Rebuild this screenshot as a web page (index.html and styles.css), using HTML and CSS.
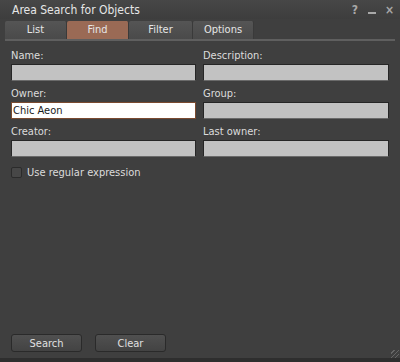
FILE: index.html
```html
<!DOCTYPE html>
<html>
<head>
<meta charset="utf-8">
<link rel="stylesheet" href="styles.css">
</head>
<body>
<div class="win">
  <div class="titlebar">
    <span class="title">Area Search for Objects</span>
    <div class="ctrls">
      <span class="ctl">?</span>
      <span class="ctl min"></span>
      <span class="ctl">×</span>
    </div>
  </div>
  <div class="tabs">
    <div class="tab">List</div>
    <div class="tab active">Find</div>
    <div class="tab">Filter</div>
    <div class="tab">Options</div>
  </div>
  <div class="body">
    <div class="grid">
      <div class="field"><label>Name:</label><div class="input"></div></div>
      <div class="field"><label>Description:</label><div class="input"></div></div>
      <div class="field"><label>Owner:</label><div class="input focus">Chic Aeon</div></div>
      <div class="field"><label>Group:</label><div class="input"></div></div>
      <div class="field"><label>Creator:</label><div class="input"></div></div>
      <div class="field"><label>Last owner:</label><div class="input"></div></div>
    </div>
    <div class="check"><span class="box"></span><span>Use regular expression</span></div>
    <div class="spacer"></div>
    <div class="buttons">
      <div class="btn">Search</div>
      <div class="btn">Clear</div>
    </div>
  </div>
  <div class="grip"></div>
</div>
</body>
</html>
```
FILE: styles.css
```css
html, body { margin: 0; padding: 0; }
body { width: 400px; height: 362px; background: #3e3e3e; font-family: "DejaVu Sans Condensed", "DejaVu Sans", sans-serif; font-stretch: condensed; font-size: 11px; color: #e4e4e4; overflow: hidden; }
.win { position: relative; width: 400px; height: 362px; background: #3f3f3f; display: flex; flex-direction: column; box-sizing: border-box; border-bottom: 4px solid #2e2e2e; }
.titlebar { height: 19px; display: flex; align-items: center; justify-content: space-between; padding: 0 7px 0 12px; background: linear-gradient(#474747, #3d3d3d); }
.title { font-size: 12px; color: #e6e6e6; padding-top: 1px; }
.ctrls { display: flex; gap: 9px; align-items: center; }
.ctl { color: #a8a8a8; font-size: 12px; font-weight: bold; width: 8px; text-align: center; }
.min { height: 2px; background: #a8a8a8; width: 8px; margin-top: 7px; }
.tabs { display: flex; margin: 2px 5px 0 5px; height: 18px; border-bottom: 2px solid #5f5f5f; }
.tab { width: 62px; text-align: center; line-height: 18px; background: linear-gradient(#555, #4a4a4a); color: #e6e6e6; border-radius: 2px 2px 0 0; box-sizing: border-box; border-right: 1px solid #3a3a3a; }
.tab:nth-child(3) { width: 64px; }
.tab:nth-child(4) { width: 61px; }
.tab.active { background: #9a6a55; }
.body { flex: 1; display: flex; flex-direction: column; padding: 7px 11px 6px 11px; }
.grid { display: grid; grid-template-columns: 185px 186px; column-gap: 7px; row-gap: 5px; }
.field label { display: block; height: 16px; line-height: 16px; color: #dcdcdc; }
.input { height: 17px; box-sizing: border-box; background: #c2c2c2; border: 1px solid #262626; border-bottom-color: #6a6a6a; color: #1a1a1a; line-height: 15px; padding-left: 1px; }
.input.focus { background: #ffffff; border: 1px solid #7a4a30; }
.check { display: flex; align-items: center; gap: 5px; margin-top: 9px; color: #dcdcdc; }
.box { width: 11px; height: 11px; background: #474747; border: 1px solid #2b2b2b; border-radius: 2px; box-sizing: border-box; }
.spacer { flex: 1; }
.buttons { display: flex; gap: 13px; }
.btn { width: 71px; height: 18px; line-height: 18px; text-align: center; box-sizing: border-box; background: linear-gradient(#505050, #434343); border: 1px solid #2a2a2a; border-radius: 3px; color: #e0e0e0; }
.grip { position: absolute; right: 1px; bottom: 0px; width: 8px; height: 8px; background: repeating-linear-gradient(135deg, transparent 0 2px, #666 2px 3px); }
```
